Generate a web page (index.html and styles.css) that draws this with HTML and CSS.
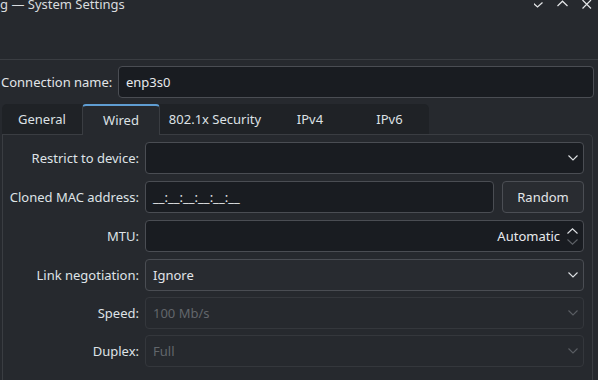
FILE: index.html
```html
<!DOCTYPE html>
<html>
<head>
<meta charset="utf-8">
<link rel="stylesheet" href="styles.css">
</head>
<body>
<div class="window">
  <header class="titlebar">
    <div class="title">g — System Settings</div>
    <svg class="controls" width="64" height="12" viewBox="534 -2 64 12">
      <polyline points="532.5,2.5 537.5,7 542.5,2.5" fill="none" stroke="#e4e6e8" stroke-width="1.2"/>
      <polyline points="557.5,6 562.5,1.2 567.5,6" fill="none" stroke="#e4e6e8" stroke-width="1.2"/>
      <path d="M582.5 0 L591 8.5 M591 0 L582.5 8.5" fill="none" stroke="#e4e6e8" stroke-width="1.2"/>
    </svg>
  </header>

  <div class="conn-row">
    <div class="conn-label">Connection name:</div>
    <div class="field edit conn-input">enp3s0</div>
  </div>

  <div class="tabs">
    <div class="tabbar">
      <div class="tab t-general">General</div>
      <div class="tab active t-wired">Wired</div>
      <div class="tab t-sec">802.1x Security</div>
      <div class="tab t-ipv4">IPv4</div>
      <div class="tab t-ipv6">IPv6</div>
    </div>
  </div>

  <div class="panel">
    <div class="form">
      <div class="label">Restrict to device:</div>
      <div class="field edit combo">
        <span class="value"></span>
        <svg class="chev" width="10" height="6" viewBox="0 0 10 6"><polyline points="0.5,0.5 5,5 9.5,0.5" fill="none" stroke="#dfe2e5" stroke-width="1.1"/></svg>
      </div>

      <div class="label">Cloned MAC address:</div>
      <div class="mac-row">
        <div class="field edit mac">__:__:__:__:__:__</div>
        <div class="field button">Random</div>
      </div>

      <div class="label">MTU:</div>
      <div class="field edit spin">
        <span class="spin-value">Automatic</span>
        <svg class="spin-arrows" width="11" height="17" viewBox="0 0 11 17">
          <polyline points="0.5,5.5 5.5,0.8 10.5,5.5" fill="none" stroke="#dfe2e5" stroke-width="1.1"/>
          <polyline points="0.5,11.5 5.5,16.2 10.5,11.5" fill="none" stroke="#5d6166" stroke-width="1.1"/>
        </svg>
      </div>

      <div class="label">Link negotiation:</div>
      <div class="field combo plain">
        <span class="value">Ignore</span>
        <svg class="chev" width="10" height="6" viewBox="0 0 10 6"><polyline points="0.5,0.5 5,5 9.5,0.5" fill="none" stroke="#dfe2e5" stroke-width="1.1"/></svg>
      </div>

      <div class="label">Speed:</div>
      <div class="field combo disabled">
        <span class="value">100 Mb/s</span>
        <svg class="chev" width="10" height="6" viewBox="0 0 10 6"><polyline points="0.5,0.5 5,5 9.5,0.5" fill="none" stroke="#5a5e63" stroke-width="1.1"/></svg>
      </div>

      <div class="label">Duplex:</div>
      <div class="field combo disabled">
        <span class="value">Full</span>
        <svg class="chev" width="10" height="6" viewBox="0 0 10 6"><polyline points="0.5,0.5 5,5 9.5,0.5" fill="none" stroke="#5a5e63" stroke-width="1.1"/></svg>
      </div>
    </div>
  </div>
</div>
</body>
</html>
```

FILE: styles.css
```css
* {
  box-sizing: border-box;
}

html, body {
  margin: 0;
  padding: 0;
}

body {
  width: 598px;
  height: 380px;
  overflow: hidden;
  background: #26292e;
  font-family: "Noto Sans", "DejaVu Sans", sans-serif;
  font-size: 13px;
  color: #e1e4e8;
}

.titlebar {
  height: 60px;
  border-bottom: 1px solid #3a3d42;
  display: flex;
  justify-content: space-between;
  align-items: flex-start;
}

.title {
  margin-top: -5px;
  line-height: 18px;
  color: #d9dcdf;
  white-space: nowrap;
}

.controls {
  display: block;
  margin-top: -2px;
}

.conn-row {
  display: flex;
  align-items: center;
  gap: 8px;
  margin-top: 6px;
  padding-left: 1px;
  padding-right: 4px;
}

.conn-label {
  width: 109px;
  white-space: nowrap;
}

.conn-input {
  flex: 1;
}

.field {
  height: 32px;
  border: 1px solid #4a4d53;
  border-radius: 4px;
  display: flex;
  align-items: center;
  padding: 0 7px;
  white-space: nowrap;
}

.edit {
  background: #191c21;
  color: #e8eaed;
}

.tabs {
  display: flex;
  margin-top: 6px;
  margin-left: 2px;
}

.tabbar {
  display: flex;
  align-items: flex-start;
  height: 30px;
  background: #1f2226;
  border-radius: 5px 5px 0 0;
}

.tab {
  height: 30px;
  display: flex;
  align-items: center;
  justify-content: center;
  color: #dde1e5;
  white-space: nowrap;
}

.t-general { width: 80px; }
.t-wired { width: 78px; }
.t-sec { width: 110px; }
.t-ipv4 { width: 80px; }
.t-ipv6 { width: 79px; }

.tab.active {
  height: 31px;
  margin-bottom: -1px;
  padding-bottom: 2px;
  background: #26292e;
  border: 1px solid #3a3d42;
  border-top: 2px solid #5f9dd2;
  border-bottom: none;
  border-radius: 4px 4px 0 0;
  position: relative;
  z-index: 1;
}

.panel {
  margin-left: 2px;
  margin-right: 5px;
  height: 260px;
  border: 1px solid #3a3d42;
  border-bottom: none;
  border-top-right-radius: 5px;
  padding: 7px 8px 0 0;
}

.form {
  display: grid;
  grid-template-columns: 136px 1fr;
  grid-template-rows: 32px 32px 32px 31px 31px 31px;
  column-gap: 6px;
  row-gap: 7px;
}

.label {
  align-self: center;
  text-align: right;
  white-space: nowrap;
  color: #dfe3e7;
}

.combo {
  justify-content: space-between;
  padding-right: 5px;
}

.combo .chev {
  display: block;
}

.plain {
  background: #282b30;
}

.disabled {
  background: #26292e;
  border-color: #34373c;
  color: #62666b;
}

.mac-row {
  display: flex;
  gap: 8px;
}

.mac {
  flex: 1;
}

.button {
  width: 82px;
  justify-content: center;
  background: #292c31;
  border-color: #4b4e54;
  color: #e3e6e9;
}

.spin {
  justify-content: flex-end;
  padding-right: 5px;
  gap: 7px;
}

.spin-arrows {
  display: block;
}
```
